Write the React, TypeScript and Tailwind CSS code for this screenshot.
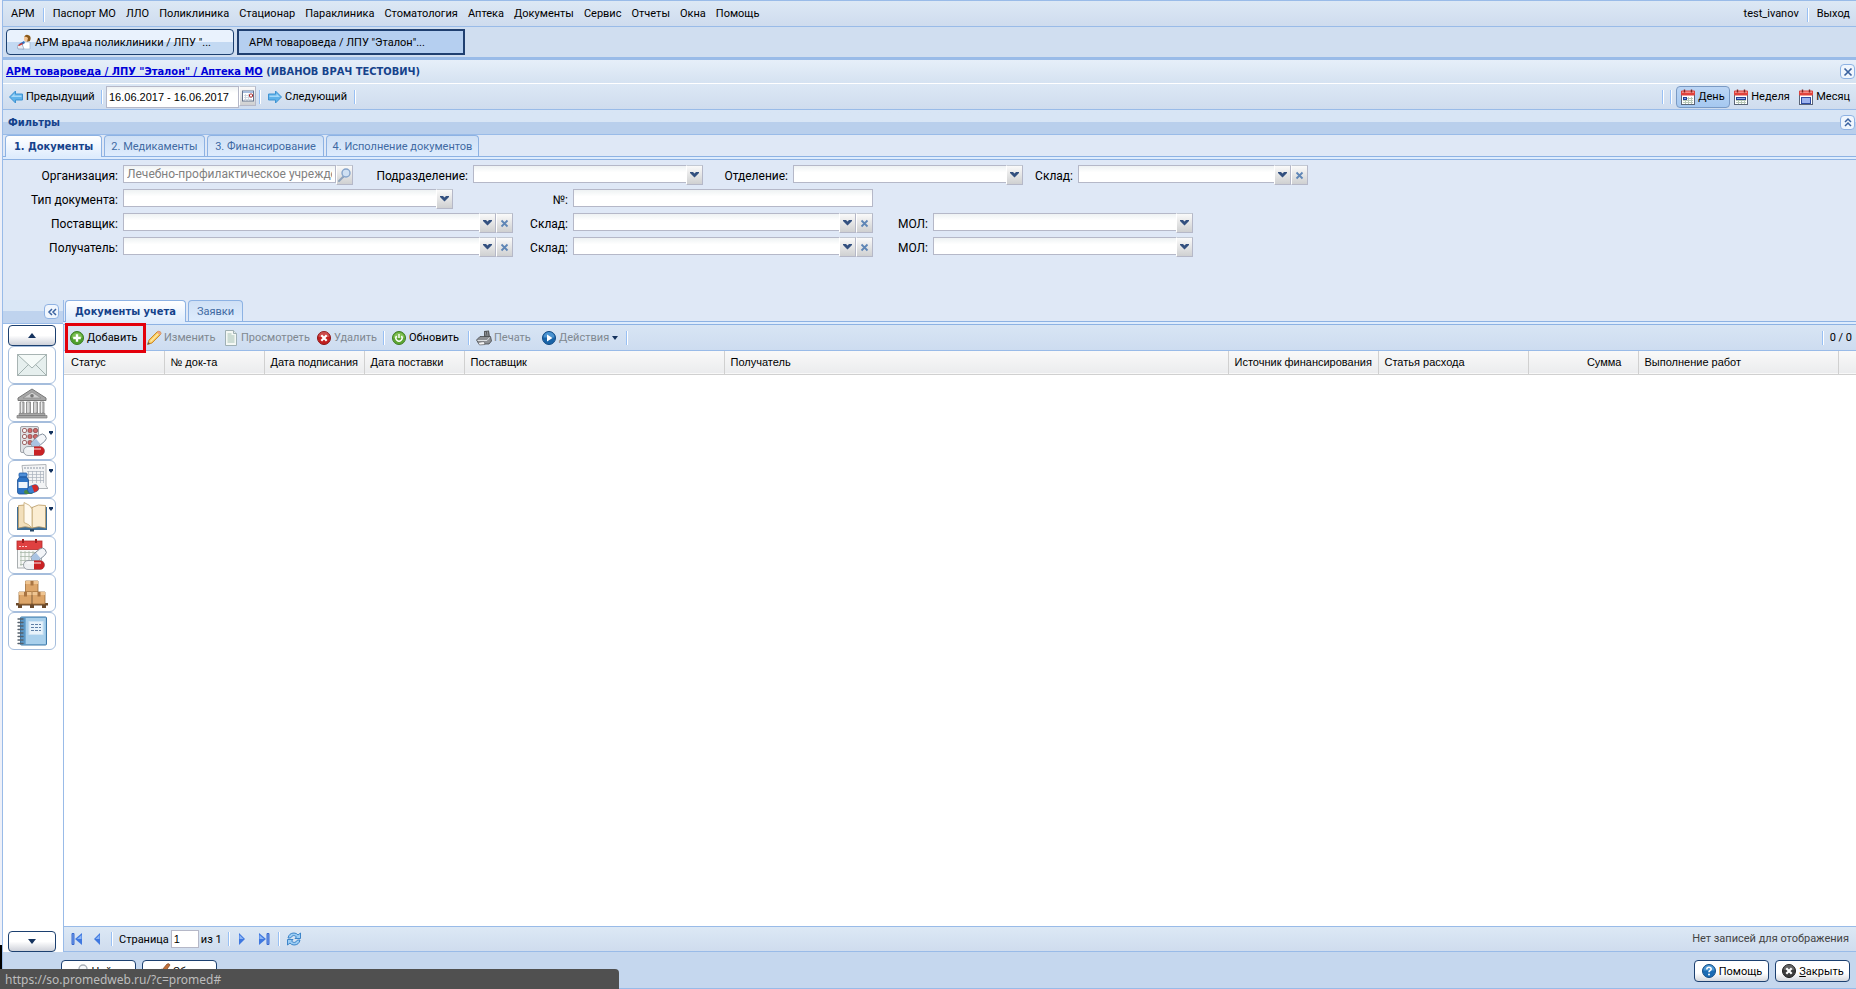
import { useId, useState } from "react";
import type { ReactNode } from "react";
import clsx from "clsx";

const menu = [
  "Паспорт МО",
  "ЛЛО",
  "Поликлиника",
  "Стационар",
  "Параклиника",
  "Стоматология",
  "Аптека",
  "Документы",
  "Сервис",
  "Отчеты",
  "Окна",
  "Помощь",
];

const filterTabs = [
  { title: "1. Документы", width: "w-[97px]" },
  { title: "2. Медикаменты", width: "w-[101px]" },
  { title: "3. Финансирование", width: "w-[117px]" },
  { title: "4. Исполнение документов", width: "w-[153px]" },
];

const gridTabs = [
  { title: "Документы учета", width: "w-[121px]" },
  { title: "Заявки", width: "w-[55px]" },
];

const columns = [
  { title: "Статус", width: "w-[100px]" },
  { title: "№ док-та", width: "w-[100px]" },
  { title: "Дата подписания", width: "w-[100px]" },
  { title: "Дата поставки", width: "w-[100px]" },
  { title: "Поставщик", width: "w-[260px]" },
  { title: "Получатель", width: "" },
  { title: "Источник финансирования", width: "w-[150px]" },
  { title: "Статья расхода", width: "w-[150px]" },
  { title: "Сумма", width: "w-[110px]", right: true },
  { title: "Выполнение работ", width: "w-[200px]" },
  { title: "", width: "w-[18px]" },
];

/* ---------- small icons ---------- */

const Svg = ({ size = 16, children }: { size?: number; children: ReactNode }) => (
  <svg width={size} height={size} viewBox={`0 0 ${size} ${size}`} className="shrink-0" aria-hidden="true">
    {children}
  </svg>
);

const DoctorIcon = () => (
  <Svg>
    <path d="M7 4 Q8 0 11 1 Q15 2 13 7 L10 8 Z" fill="#8a5a1c" />
    <path d="M7 3 Q9 2 11 4 L10 8 Q8 8 7 6Z" fill="#f3c595" />
    <path d="M6 8 L13 8 L13 15 L5 15Z" fill="#fff" stroke="#9db4cf" strokeWidth="0.7" />
    <path d="M2 10 L7 7 L8 9 L3 12Z" fill="#2f6fbe" />
    <path d="M0 12 L5 10 L7 15 L1 15Z" fill="#e8edf5" stroke="#7b92b0" strokeWidth="0.6" />
    <path d="M1 11 L5 9 L6 10 L2 12Z" fill="#d8352a" />
  </Svg>
);

const ArrowIcon = ({ right }: { right?: boolean }) => (
  <Svg>
    <g transform={right ? "matrix(-1 0 0 1 16 0)" : undefined}>
      <path d="M1.5 8 L7.5 2 V5 H14.5 V11 H7.5 V14 Z" fill="#5fb2ea" stroke="#3f93d2" />
      <path d="M3 8 L6.5 4.5 V6.5 H13.5 V8Z" fill="#a5d8f8" />
    </g>
  </Svg>
);

const CalendarIcon = ({ kind }: { kind: string }) => (
  <Svg>
    <rect x="1.5" y="2.5" width="13" height="13" fill="#fff" stroke="#5b6577" />
    <rect x="1" y="1.5" width="14" height="5" rx="1" fill="#e0423c" />
    <rect x="2" y="2.5" width="12" height="1.5" fill="#f38d88" />
    <path d="M4.5 0.5v3M11.5 0.5v3" stroke="#7d2622" strokeWidth="1.4" />
    <path d="M3 9.5h10M3 11.5h10M3 13.5h10M5.5 8v7M8.5 8v7M11.5 8v7" stroke="#b9c9b8" />
    {kind === "day" && <rect x="3.5" y="8.5" width="3" height="2" fill="#7f9ee8" stroke="#223f94" />}
    {kind === "week" && <rect x="3.5" y="8.5" width="9" height="2" fill="#8faae8" stroke="#223f94" />}
    {kind === "month" && <rect x="3.5" y="8.5" width="9" height="6" fill="#9db3ee" stroke="#2d4aa0" />}
  </Svg>
);

const DateTriggerIcon = () => (
  <Svg size={12}>
    <rect x="0.5" y="1" width="11" height="10" fill="#fff" stroke="#65748e" />
    <rect x="1" y="1" width="10" height="2" fill="#a9bedd" />
    <path d="M2 5.5h8M2 7.5h8M2 9.5h8M3.5 4v7M6.5 4v7" stroke="#c9d2dd" strokeWidth="0.8" />
    <rect x="7.5" y="4" width="3" height="3" rx="1" fill="#fff" stroke="#a82020" />
  </Svg>
);

const AddIcon = () => (
  <Svg>
    <circle cx="8" cy="8" r="6.5" fill="#4fa02c" stroke="#3a7d22" />
    <path d="M2.5 8 A5.5 5.5 0 0 1 13.5 8Z" fill="#79bd50" />
    <path d="M8 4.2v7.6M4.2 8h7.6" stroke="#fff" strokeWidth="2.4" />
  </Svg>
);

const PencilIcon = () => (
  <Svg>
    <path d="M1.5 14.5 L3 10 L11 2 Q13 0.5 14.5 2 Q15.5 3.5 14 5 L6 13Z" fill="#f9c85a" stroke="#c98a30" />
    <path d="M4.5 11.5 L12 4" stroke="#fde9a8" strokeWidth="1.5" />
    <path d="M11 2 Q13 0.5 14.5 2 Q15.5 3.5 14 5Z" fill="#eaa190" />
    <path d="M1.5 14.5 L2.3 12 L4 13.8Z" fill="#555" />
  </Svg>
);

const PageIcon = () => (
  <Svg>
    <path d="M2.5 0.5h8l3 3v12h-11Z" fill="#f4f8f4" stroke="#9fb0b4" />
    <path d="M10.5 0.5v3h3" fill="#dfe8e8" stroke="#9fb0b4" />
    <path d="M4.5 4h4M4.5 6h7M4.5 8h7M4.5 10h7M4.5 12h7" stroke="#a5c0b4" />
  </Svg>
);

const DeleteIcon = ({ color = "#c21f1f", edge = "#8c1414" }: { color?: string; edge?: string }) => (
  <Svg>
    <circle cx="8" cy="8" r="6.5" fill={color} stroke={edge} />
    <path d="M2.5 7 A5.5 5.5 0 0 1 13.5 7Z" fill="#fff" opacity="0.2" />
    <path d="M5.3 5.3l5.4 5.4M10.7 5.3l-5.4 5.4" stroke="#fff" strokeWidth="2.2" />
  </Svg>
);

const ReloadIcon = () => (
  <Svg>
    <circle cx="8" cy="8" r="6.5" fill="#5da632" stroke="#3f7d24" />
    <path d="M2.5 8 A5.5 5.5 0 0 1 13.5 8Z" fill="#7fbe52" />
    <path d="M5.6 6 A3.1 3.1 0 1 0 10.4 6" fill="none" stroke="#fff" strokeWidth="1.4" />
    <path d="M8 4v4" stroke="#fff" strokeWidth="1.4" />
  </Svg>
);

const PrinterIcon = () => (
  <Svg>
    <path d="M8 1 L13 0.5 L14 7 L8 8Z" fill="#55585c" />
    <path d="M9.3 2 L10.3 7M11.5 1.6 L12 7" stroke="#b0b4b8" strokeWidth="0.7" />
    <path d="M0.5 10 L4 6.5 L14.5 6.5 L15.5 11 L13 14 L3 14Z" fill="#8d9094" stroke="#44474a" strokeWidth="0.8" />
    <path d="M1.5 10.5 L11 10.5 L13.5 7.5" fill="none" stroke="#dcdfe2" />
    <path d="M2 12.5 L8 11.5 L9 14.5 L3.5 15Z" fill="#f5f5f5" stroke="#55585c" strokeWidth="0.6" />
  </Svg>
);

const ActionIcon = () => (
  <Svg>
    <circle cx="8" cy="8" r="6.5" fill="#1863a8" stroke="#114a84" />
    <path d="M2.5 7.5 A5.5 5.5 0 0 1 13.5 7.5Z" fill="#4b93d0" />
    <path d="M6 4.5 L11.5 8 L6 11.5Z" fill="#fff" />
  </Svg>
);

const HelpIcon = () => (
  <Svg>
    <circle cx="8" cy="8" r="6.5" fill="#1c6cb4" stroke="#124d86" />
    <path d="M2.5 7.5 A5.5 5.5 0 0 1 13.5 7.5Z" fill="#4d97d2" />
    <path d="M5.8 6.4 Q5.8 4.3 8 4.3 Q10.3 4.3 10.2 6.2 Q10 7.3 8.8 7.8 Q8 8.2 8 9.2" fill="none" stroke="#fff" strokeWidth="1.6" />
    <circle cx="8" cy="11.4" r="1" fill="#fff" />
  </Svg>
);

const SearchIcon = ({ pale }: { pale?: boolean }) => (
  <Svg>
    <path d="M6.5 9.5 L2 14" stroke={pale ? "#a9a9a9" : "#8fa3bd"} strokeWidth="2" strokeLinecap="round" />
    <circle cx="9" cy="6" r="4" fill={pale ? "#f6f8fa" : "#cfe0f3"} stroke={pale ? "#a9b0b8" : "#86a4cb"} strokeWidth="1.4" />
  </Svg>
);

const BrushIcon = () => (
  <Svg>
    <path d="M7 7 L12 1 Q14.5 0 15 2 L10 9Z" fill="#c2703a" stroke="#7d4724" strokeWidth="0.7" />
    <path d="M1 12 Q3 6 7 6 L11 9 Q9 14 4 15Z" fill="#e8c98a" stroke="#9a7a3a" strokeWidth="0.7" />
  </Svg>
);

const PageArrow = ({ left, bar }: { left?: boolean; bar?: boolean }) => (
  <Svg>
    <g transform={left ? "matrix(-1 0 0 1 16 0)" : undefined}>
      <path d={bar ? "M3 2 L10 8 L3 14Z" : "M5 2 L11 8 L5 14Z"} fill="#3f78e0" />
      <path d={bar ? "M3.5 4 L8 8 H3.5Z" : "M5.5 4 L9.5 8 H5.5Z"} fill="#8db6f5" />
      {bar && <path d="M11 2.5h2v11h-2z" fill="#6f9df0" stroke="#3a68cc" />}
    </g>
  </Svg>
);

const RefreshIcon = () => (
  <Svg>
    <path d="M2 7 Q3 2 8 2 Q10.5 2 12 4 L14.5 2 V7.5 H9 L10.5 5.8 Q7 2.8 4.5 7Z" fill="#9ccdf4" stroke="#2f7cc4" strokeWidth="0.9" />
    <path d="M14 9 Q13 14 8 14 Q5.5 14 4 12 L1.5 14 V8.5 H7 L5.5 10.2 Q9 13.2 11.5 9Z" fill="#9ccdf4" stroke="#2f7cc4" strokeWidth="0.9" />
  </Svg>
);

const Chevron = () => (
  <svg width="9" height="6" viewBox="0 0 9 6" aria-hidden="true">
    <path d="M0 0h3l1.5 1.5L6 0h3v1L4.5 5.5L0 1Z" fill="#33507f" />
  </svg>
);

const Caret = ({ up }: { up?: boolean }) => (
  <svg width="8" height="5" viewBox="0 0 8 5" aria-hidden="true">
    <path d={up ? "M0 5 L4 0 L8 5Z" : "M0 0 L4 5 L8 0Z"} fill="#15335e" />
  </svg>
);

/* ---------- sidebar pictures, 32 x 32 ---------- */

const MailPicture = () => (
  <Svg size={32}>
    <rect x="1.5" y="5.5" width="29" height="21" fill="#e6efee" stroke="#a8b4b3" />
    <path d="M2 6 L16 19 L30 6Z" fill="#f5faf8" />
    <path d="M2 26 L12.5 15.5M30 26 L19.5 15.5M2 6 L16 19 L30 6" fill="none" stroke="#a3b2b0" />
  </Svg>
);

const BankPicture = () => (
  <Svg size={32}>
    <path d="M16 2 L30 11 V13.5 H2 V11Z" fill="#a6a6a6" stroke="#787878" />
    <path d="M16 5 L25 11 H7Z" fill="#d0d0d0" stroke="#8a8a8a" strokeWidth="0.7" />
    <circle cx="16" cy="8.8" r="1.8" fill="#777" />
    <path d="M4 15h4v11H4zM10.5 15h4v11h-4zM17.5 15h4v11h-4zM24 15h4v11h-4z" fill="#bdbdbd" stroke="#808080" strokeWidth="0.8" />
    <path d="M5.5 15v11M12 15v11M19 15v11M25.5 15v11" stroke="#ececec" />
    <path d="M3 26.5h26v2H3zM1 28.5h30v2.5H1z" fill="#a8a8a8" stroke="#7c7c7c" strokeWidth="0.7" />
  </Svg>
);

const Capsules = () => (
  <>
    <g transform="rotate(-40 22 16)">
      <rect x="14" y="12.5" width="17" height="8" rx="4" fill="#f3f5f8" stroke="#7f8b9a" strokeWidth="0.9" />
      <path d="M22 12.9v7.2h-4a3.6 3.6 0 0 1 0-7.2Z" fill="#a9c3e2" />
    </g>
    <rect x="7.5" y="21.5" width="21" height="9" rx="4.5" fill="#eef0f2" stroke="#888f98" strokeWidth="0.8" />
    <path d="M18 21.5h6a4.5 4.5 0 0 1 0 9h-6Z" fill="#c92224" />
    <path d="M11 24h14" stroke="#fff" strokeWidth="1.5" opacity="0.6" />
  </>
);

const PillsPicture = () => (
  <Svg size={32}>
    <rect x="4.5" y="1.5" width="18" height="26" rx="1.5" fill="#dfe1e4" stroke="#a0a4a9" />
    {[5, 11, 17].map((y) =>
      [6.5, 12, 17.5].map((x) => (
        <rect key={`${x}-${y}`} x={x} y={y - 1.5} width="4" height="4" rx="1.5" fill={x < 7 ? "#f5f5f5" : "#cf6a6a"} stroke="#8d4a4a" strokeWidth="0.8" />
      ))
    )}
    <Capsules />
  </Svg>
);

const BottlePicture = () => (
  <Svg size={32}>
    <path d="M6 2.5 L30 1.5 V23 L32 25.5 H9Z" fill="#f3f4f5" stroke="#b0b4b8" />
    <path d="M8 5h20" stroke="#8a95a5" strokeDasharray="2 1" />
    <path d="M11 8.5h17M11 11.5h17M11 14.5h17M11 17.5h17M12.5 8v12M16.5 8v12M20.5 8v12M24.5 8v12M27.5 8v12" stroke="#a7b0bc" strokeWidth="0.7" />
    <rect x="3" y="10" width="8" height="4" rx="1" fill="#4f8fd8" stroke="#1e5ca8" strokeWidth="0.8" />
    <path d="M3.5 14h7l2 3v12q0 2-2 2H3.5q-2 0-2-2V17Z" fill="#2e73c4" stroke="#1a4f94" strokeWidth="0.8" />
    <rect x="2.5" y="19" width="9" height="6" fill="#eef4fb" />
    <rect x="8" y="27" width="9" height="4" rx="2" fill="#4a8a42" />
    <g transform="rotate(-20 17 26)">
      <rect x="11.5" y="22.5" width="11" height="7" rx="3.5" fill="#3a80cf" stroke="#1f559a" strokeWidth="0.7" />
      <path d="M17 22.5h2a3.5 3.5 0 0 1 0 7h-2Z" fill="#d22a2a" />
    </g>
  </Svg>
);

const BookPicture = () => (
  <Svg size={32}>
    <path d="M1 6h30v23H1Z" fill="#3d6d96" />
    <path d="M2.5 4.5 Q10 2.5 16 6.5 V27 Q9 24.5 2.5 27Z" fill="#f2dfbb" stroke="#b99b66" strokeWidth="0.8" />
    <path d="M29.5 4.5 Q22 2.5 16 6.5 V27 Q23 24.5 29.5 27Z" fill="#fbedd2" stroke="#b99b66" strokeWidth="0.8" />
    <path d="M8 1.5 Q15 4 16 8 V27 Q13 23 8 21.5Z" fill="#fffaf0" stroke="#c4a874" strokeWidth="0.8" />
    <path d="M14 28h4v2.5h-4z" fill="#27496a" />
  </Svg>
);

const CalendarPillsPicture = () => (
  <Svg size={32}>
    <rect x="1.5" y="3" width="24" height="26" fill="#f7f8f7" stroke="#a9aeb0" />
    <rect x="1" y="2" width="25" height="8.5" fill="#df4040" stroke="#b52a2a" strokeWidth="0.8" />
    <path d="M7 0v4M20 0v4" stroke="#9c2020" strokeWidth="2" />
    <path d="M3 7.5h8" stroke="#f8c9c9" strokeDasharray="2 1" />
    <path d="M4 13.5h19M4 17.5h19M4 21.5h15M4 25.5h6M5 12v15M9 12v15M13 12v12M17 12v10M21 12v6" stroke="#a9b8a9" strokeWidth="0.8" />
    <Capsules />
  </Svg>
);

const BoxesPicture = () => (
  <Svg size={32}>
    <path d="M0 26h32v2.5H0zM2 28h4v3H2zM14 28h4v3h-4zM26 28h4v3h-4z" fill="#6b4a2c" />
    <path d="M3 15h12.5v12H3zM16.5 15H29v12H16.5zM9.5 4H22v11H9.5z" fill="#dda66a" stroke="#9c6c38" strokeWidth="0.8" />
    <path d="M3 15h12.5v3H3zM16.5 15H29v3H16.5zM9.5 4H22v3H9.5z" fill="#efc592" />
    <path d="M8 15h3v4.5H8zM21.5 15h3v4.5h-3zM14.5 4h3v4.5h-3z" fill="#a87442" />
  </Svg>
);

const NotebookPicture = () => (
  <Svg size={32}>
    <rect x="4.5" y="2" width="26" height="28" rx="1" fill="#8fbfe2" stroke="#3d78a8" />
    <rect x="5" y="2.5" width="4.5" height="27" fill="#5b97c6" />
    <path d="M10 3h19.5v26H10Z" fill="#a9d0ec" />
    <rect x="13" y="6.5" width="14" height="13" fill="#e8f3fb" stroke="#cfe4f4" />
    <path d="M15 9.5h10M15 12.5h10M15 15.5h10" stroke="#5e7fa6" strokeDasharray="3 1" />
    {[4, 7.5, 11, 14.5, 18, 21.5, 25, 28.5].map((y) => (
      <path key={y} d={`M2 ${y}h5`} stroke="#56616c" strokeWidth="1.4" strokeLinecap="round" />
    ))}
  </Svg>
);

const sidebar = [
  { title: "Сообщения", picture: <MailPicture /> },
  { title: "Организации", picture: <BankPicture /> },
  { title: "Медикаменты", picture: <PillsPicture />, menu: true },
  { title: "План", picture: <BottlePicture />, menu: true },
  { title: "Справочники", picture: <BookPicture />, menu: true },
  { title: "Сроки годности", picture: <CalendarPillsPicture /> },
  { title: "Склад", picture: <BoxesPicture /> },
  { title: "Журнал", picture: <NotebookPicture /> },
];

/* ---------- controls ---------- */

const Separator = ({ className }: { className?: string }) => (
  <span className={clsx("h-3.5 w-0.5 shrink-0 border-l border-[#98c0f4] bg-white", className)} />
);

const Tool = ({ title, className }: { title: string; className?: string }) => {
  const paths: Record<string, ReactNode> = {
    close: <path d="M3.5 3.5l7 7M10.5 3.5l-7 7" strokeWidth="1.7" />,
    up: <path d="M4 7l3-3 3 3M4 11l3-3 3 3" strokeWidth="1.5" />,
    left: <path d="M7 4L4 7l3 3M11 4L8 7l3 3" strokeWidth="1.5" />,
  };
  return (
    <button
      aria-label={title}
      className={clsx("flex size-[15px] shrink-0 items-center justify-center rounded-sm border border-[#8eb2e3] bg-[#f0f6fd]", className)}
    >
      <svg width="14" height="14" viewBox="0 0 14 14" fill="none" stroke="#3a62a0" className="shrink-0" aria-hidden="true">
        {paths[title]}
      </svg>
    </button>
  );
};

const triggerLook =
  "flex h-5 w-[17px] shrink-0 items-center justify-center border border-t-[#c3c9d3] border-r-[#b5b8c8] border-b-[#b5b8c8] border-l-white bg-linear-to-b from-[#fafafa] to-[#cfd0d1]";

const inputLook = "h-[18px] border border-[#b5b8c8] bg-linear-to-b from-[#eef2f3] to-white to-40%";

const boldText = "font-['DejaVu_Sans_Condensed','Noto_Sans',sans-serif] font-bold text-[#15428b]";

type FieldProps = {
  label: string;
  labelWidth: string;
  width: string;
  kind?: "combo" | "text" | "search";
  clear?: boolean;
  value?: string;
};

const Field = ({ label, labelWidth, width, kind = "combo", clear, value }: FieldProps) => {
  const id = useId();
  return (
    <div className="flex h-5 shrink-0 items-start gap-[5px]">
      <label htmlFor={id} className={clsx("shrink-0 text-right leading-[22px] whitespace-nowrap", labelWidth)}>
        {label}:
      </label>
      <div className={clsx("flex", width)}>
        {kind === "combo" && (
          <div className="relative flex h-5 min-w-0 flex-1">
            <select id={id} className={clsx("w-full min-w-0 appearance-none", inputLook)} />
            <span className={clsx("pointer-events-none absolute top-0 right-0", triggerLook)}>
              <Chevron />
            </span>
          </div>
        )}
        {kind !== "combo" && (
          <input
            id={id}
            defaultValue={value}
            className={clsx("min-w-0 flex-1 px-[3px] text-[#808080] outline-none", inputLook)}
          />
        )}
        {kind === "search" && (
          <button aria-label="Поиск" className={triggerLook}>
            <SearchIcon />
          </button>
        )}
        {clear && (
          <button aria-label="Очистить" className={triggerLook}>
            <svg width="9" height="9" viewBox="0 0 9 9" aria-hidden="true">
              <path d="M1.5 1.5l6 6M7.5 1.5l-6 6" stroke="#5f86b6" strokeWidth="1.8" />
            </svg>
          </button>
        )}
      </div>
    </div>
  );
};

type TabsProps = { tabs: { title: string; width: string }[]; className?: string };

const Tabs = ({ tabs, className }: TabsProps) => {
  const [active, setActive] = useState(0);
  return (
    <div className={clsx("shrink-0", className)}>
      <div role="tablist" className="flex h-[22px] gap-0.5 border-b border-[#8db2e3] px-0.5">
        {tabs.map((tab, i) => (
          <button
            key={tab.title}
            role="tab"
            aria-selected={i === active}
            onClick={() => setActive(i)}
            className={clsx(
              "rounded-t border border-b-0 border-[#8db2e3] pt-px text-center text-[11px] leading-5 whitespace-nowrap",
              tab.width,
              i === active
                ? "h-[22px] bg-linear-to-b from-white to-[#deecfd]"
                : "h-[21px] bg-linear-to-b from-[#cfe0f5] to-[#deecfd] text-[#416aa3]",
              i === active && boldText
            )}
          >
            {tab.title}
          </button>
        ))}
      </div>
      <div className="h-[3px] border-b border-[#8db2e3] bg-[#deecfd]" />
    </div>
  );
};

type ToolButtonProps = {
  icon: ReactNode;
  children: ReactNode;
  after?: ReactNode;
  muted?: boolean;
  pressed?: boolean;
  className?: string;
};

const ToolButton = ({ icon, children, after, muted, pressed, className }: ToolButtonProps) => (
  <button
    className={clsx(
      "relative flex h-[22px] shrink-0 items-center gap-0.5 whitespace-nowrap",
      muted && "text-[#808890]",
      pressed && "rounded-sm border border-[#7a9ac4] bg-linear-to-b from-[#bcd6f5] to-[#a5c8f0]",
      className
    )}
  >
    {icon}
    <span className="pt-0.5">{children}</span>
    {after}
  </button>
);

const FooterButton = ({ icon, children }: { icon: ReactNode; children: ReactNode }) => (
  <button className="flex h-[22px] w-[75px] items-center justify-center gap-0.5 rounded-sm border border-[#1c4070] bg-linear-to-b from-white from-60% to-[#d5d8de]">
    {icon}
    <span className="pt-0.5">{children}</span>
  </button>
);

const ScrollButton = ({ up }: { up?: boolean }) => (
  <button
    aria-label={up ? "Вверх" : "Вниз"}
    className="flex h-[21px] w-12 shrink-0 items-center justify-center rounded-sm border border-[#1c4070] bg-linear-to-b from-white from-50% to-[#cfd2da]"
  >
    <Caret up={up} />
  </button>
);

/* ---------- page parts ---------- */

const MainMenu = () => (
  <nav className="flex h-[27px] shrink-0 items-center border-t border-b border-[#99bbe8] bg-linear-to-b from-[#dce8f5] to-[#cfdcee] pt-0.5 pr-1.5 pl-2">
    <button>АРМ</button>
    <Separator className="mx-2" />
    <div className="flex gap-2.5">
      {menu.map((item) => (
        <button key={item}>{item}</button>
      ))}
    </div>
    <div className="ml-auto flex items-center">
      <span>test_ivanov</span>
      <Separator className="mx-2" />
      <button>Выход</button>
    </div>
  </nav>
);

const Taskbar = () => (
  <div className="flex h-[33px] shrink-0 gap-[3px] border-b-[3px] border-[#99bbe8] bg-[#d0def0] px-[3px] py-0.5">
    <button className="flex h-[26px] w-[228px] items-center gap-0.5 rounded-sm border border-[#1c4070] bg-linear-to-b from-[#e9f2fd] from-50% to-[#c3d9f2] to-50% px-2.5">
      <DoctorIcon />
      <span className="pt-0.5">АРМ врача поликлиники / ЛПУ "...</span>
    </button>
    <button className="h-[26px] w-[228px] border-2 border-[#1f3f70] bg-[#b5cff0] px-2.5 pt-0.5 text-left">
      АРМ товароведа / ЛПУ "Эталон"...
    </button>
  </div>
);

const DateBar = () => (
  <div className="flex h-[27px] shrink-0 items-center border-t border-b border-t-white border-b-[#99bbe8] bg-linear-to-b from-[#dce8f5] to-[#cfdcee] pr-1.5 pl-[5px]">
    <ToolButton icon={<ArrowIcon />} className="w-[83px]">Предыдущий</ToolButton>
    <Separator className="mr-[3px] ml-2.5" />
    <input
      aria-label="Период"
      defaultValue="16.06.2017 - 16.06.2017"
      className="h-[22px] w-[133px] border border-[#b5b8c8] bg-linear-to-b from-[#eef2f3] to-white to-30% px-0.5 font-['Liberation_Sans',sans-serif]"
    />
    <button aria-label="Выбрать дату" className={clsx("mt-0.5 self-start", triggerLook)}>
      <DateTriggerIcon />
    </button>
    <Separator className="mr-1.5 ml-[3px]" />
    <ToolButton icon={<ArrowIcon right />} className="w-[77px]">Следующий</ToolButton>
    <Separator className="ml-2.5" />
    <div className="ml-auto flex items-center">
      <Separator className="mr-1.5" />
      <Separator className="mr-1" />
      <ToolButton pressed icon={<CalendarIcon kind="day" />} className="mr-[3px] w-[54px] pl-[3px]">
        День
      </ToolButton>
      <ToolButton icon={<CalendarIcon kind="week" />} className="mr-2 w-[57px]">
        Неделя
      </ToolButton>
      <ToolButton icon={<CalendarIcon kind="month" />}>Месяц</ToolButton>
    </div>
  </div>
);

const Filters = () => (
  <form className="flex h-[140px] shrink-0 flex-col gap-1 pt-[5px] text-xs" onSubmit={(e) => e.preventDefault()}>
    <div className="flex">
      <Field label="Организация" labelWidth="w-[115px]" width="w-[230px]" kind="search" value="Лечебно-профилактическое учреждение" />
      <Field label="Подразделение" labelWidth="w-[115px]" width="w-[230px]" />
      <Field label="Отделение" labelWidth="w-[85px]" width="w-[230px]" />
      <Field label="Склад" labelWidth="w-[50px]" width="w-[230px]" clear />
    </div>
    <div className="flex">
      <Field label="Тип документа" labelWidth="w-[115px]" width="w-[330px]" />
      <Field label="№" labelWidth="w-[115px]" width="w-[300px]" kind="text" />
    </div>
    <div className="flex">
      <Field label="Поставщик" labelWidth="w-[115px]" width="w-[390px]" clear />
      <Field label="Склад" labelWidth="w-[55px]" width="w-[300px]" clear />
      <Field label="МОЛ" labelWidth="w-[55px]" width="w-[260px]" />
    </div>
    <div className="flex">
      <Field label="Получатель" labelWidth="w-[115px]" width="w-[390px]" clear />
      <Field label="Склад" labelWidth="w-[55px]" width="w-[300px]" clear />
      <Field label="МОЛ" labelWidth="w-[55px]" width="w-[260px]" />
    </div>
  </form>
);

const Sidebar = () => (
  <aside className="flex w-[61px] shrink-0 flex-col border-r border-[#99bbe8] bg-white">
    <div className="flex h-6 shrink-0 items-center justify-end border-b border-[#99bbe8] bg-linear-to-b from-[#dae7f6] from-50% to-[#bfd3ee] to-50% pr-1">
      <Tool title="left" />
    </div>
    <div className="flex min-h-0 flex-1 flex-col items-start pt-px pl-[5px]">
      <ScrollButton up />
      <div className="flex min-h-0 flex-1 flex-col overflow-hidden">
        {sidebar.map((item) => (
          <button
            key={item.title}
            aria-label={item.title}
            className="relative flex h-[38px] w-12 shrink-0 items-center justify-center rounded-md border border-[#a5bddc] bg-white"
          >
            {item.picture}
            {item.menu && (
              <svg width="4" height="4" viewBox="0 0 4 4" className="absolute top-2 right-0.5" aria-hidden="true">
                <path d="M0 0h4v1.5L2 4L0 1.5Z" fill="#15335e" />
              </svg>
            )}
          </button>
        ))}
      </div>
      <ScrollButton />
    </div>
  </aside>
);

const GridToolbar = () => (
  <div className="flex h-[26px] shrink-0 items-center border-b border-[#99bbe8] bg-linear-to-b from-[#d8e5f4] to-[#cddcf0] pr-1 pl-[5px]">
    <ToolButton
      icon={<AddIcon />}
      className="mr-2 w-[69px]"
      after={<span className="pointer-events-none absolute -top-1 -left-1 h-[30px] w-[81px] border-[3px] border-[#e3000b]" />}
    >
      Добавить
    </ToolButton>
    <ToolButton muted icon={<PencilIcon />} className="mr-2.5 w-[67px]">Изменить</ToolButton>
    <ToolButton muted icon={<PageIcon />} className="mr-2.5 w-[83px]">Просмотреть</ToolButton>
    <ToolButton muted icon={<DeleteIcon />} className="w-[59px]">Удалить</ToolButton>
    <Separator className="mr-1.5 ml-2" />
    <ToolButton icon={<ReloadIcon />} className="w-[67px]">Обновить</ToolButton>
    <Separator className="mr-1.5 ml-2.5" />
    <ToolButton muted icon={<PrinterIcon />} className="mr-2.5 w-[55px]">Печать</ToolButton>
    <ToolButton
      muted
      icon={<ActionIcon />}
      className="w-[77px]"
      after={
        <svg width="6" height="4" viewBox="0 0 6 4" className="ml-auto" aria-hidden="true">
          <path d="M0 0h6L3 4Z" fill="#15335e" />
        </svg>
      }
    >
      Действия
    </ToolButton>
    <Separator className="ml-2" />
    <Separator className="mr-1.5 ml-auto" />
    <span className="pt-0.5">0 / 0</span>
  </div>
);

const Grid = () => (
  <div className="min-h-0 flex-1 overflow-hidden bg-white">
    <table className="w-full table-fixed border-collapse font-['Liberation_Sans',sans-serif]">
      <thead>
        <tr className="h-[23px] border-b border-[#d0d0d0] bg-linear-to-b from-[#f9f9f9] to-[#ebecee]">
          {columns.map((col) => (
            <th
              key={col.title}
              className={clsx(
                "border-r border-[#d0d0d0] font-normal whitespace-nowrap last:border-r-0",
                col.title && "pl-1.5 first:pl-[7px]",
                col.width,
                col.right ? "pr-4 text-right" : "text-left"
              )}
            >
              {col.title}
            </th>
          ))}
        </tr>
      </thead>
      <tbody />
    </table>
  </div>
);

const Paging = () => (
  <div className="flex h-[26px] shrink-0 items-center border-t border-b border-[#99bbe8] bg-linear-to-b from-[#dce8f5] to-[#cfdcee] pr-[7px] pl-[5px]">
    <button aria-label="Первая страница"><PageArrow left bar /></button>
    <button aria-label="Предыдущая страница" className="ml-1"><PageArrow left /></button>
    <Separator className="mx-1.5" />
    <label htmlFor="page" className="pt-0.5">Страница</label>
    <input
      id="page"
      defaultValue="1"
      className="mx-0.5 h-[18px] w-7 border border-[#b5b8c8] bg-white px-0.5 font-['Liberation_Sans',sans-serif]"
    />
    <span className="pt-0.5">из 1</span>
    <Separator className="mr-1 ml-1.5" />
    <button aria-label="Следующая страница"><PageArrow /></button>
    <button aria-label="Последняя страница" className="ml-1.5"><PageArrow bar /></button>
    <Separator className="mx-1.5" />
    <button aria-label="Обновить страницу"><RefreshIcon /></button>
    <span className="ml-auto pt-px text-[#444]">Нет записей для отображения</span>
  </div>
);

const App = () => (
  <div className="relative flex h-screen bg-[#eef0f8] font-['Roboto',sans-serif] text-[11px] text-black">
    <div className="flex w-[3px] shrink-0 flex-col justify-end border-r border-[#99bbe8]">
      <div className="h-11 bg-black" />
    </div>
    <div className="flex min-w-0 flex-1 flex-col bg-[#dfe8f6]">
      <MainMenu />
      <Taskbar />
      <header className="flex h-[23px] shrink-0 items-center bg-linear-to-b from-[#e6eff9] to-[#d5e2f1] pr-px pl-[3px]">
        <h1 className={clsx("pt-0.5", boldText)}>
          <a href="#" className="text-[#0000d8] underline">АРМ товароведа / ЛПУ "Эталон" / Аптека МО</a>
          {" (ИВАНОВ ВРАЧ ТЕСТОВИЧ)"}
        </h1>
        <Tool title="close" className="ml-auto" />
      </header>
      <DateBar />
      <div className="flex h-[25px] shrink-0 items-center justify-between border-b border-[#99bbe8] bg-linear-to-b from-[#d8e5f5] from-50% to-[#b9cfec] to-50% pr-px pl-[5px]">
        <h2 className={clsx("pt-0.5", boldText)}>Фильтры</h2>
        <Tool title="up" />
      </div>
      <Tabs tabs={filterTabs} />
      <Filters />
      <main className="flex min-h-0 flex-1">
        <Sidebar />
        <section className="flex min-w-0 flex-1 flex-col">
          <Tabs tabs={gridTabs} className="-ml-px" />
          <GridToolbar />
          <Grid />
          <Paging />
        </section>
      </main>
      <footer className="flex h-[37px] shrink-0 items-start gap-1.5 border-b border-[#99bbe8] bg-[#c5d7ee] pt-2 pr-1.5 pl-[58px]">
        <FooterButton icon={<SearchIcon pale />}>Найти</FooterButton>
        <FooterButton icon={<BrushIcon />}>Сброс</FooterButton>
        <div className="ml-auto flex gap-1.5">
          <FooterButton icon={<HelpIcon />}>Помощь</FooterButton>
          <FooterButton icon={<DeleteIcon color="#3c3c3c" edge="#1e1e1e" />}>
            <span className="underline">З</span>акрыть
          </FooterButton>
        </div>
      </footer>
    </div>
    {/* link address shown by the browser */}
    <div className="absolute bottom-0 left-0 h-5 w-1/3 rounded-tr bg-[#505050] pl-[5px] font-['Noto_Sans',sans-serif] text-xs leading-[22px] text-[#bdbdbd]">
      https://so.promedweb.ru/?c=promed#
    </div>
  </div>
);

export default App;
